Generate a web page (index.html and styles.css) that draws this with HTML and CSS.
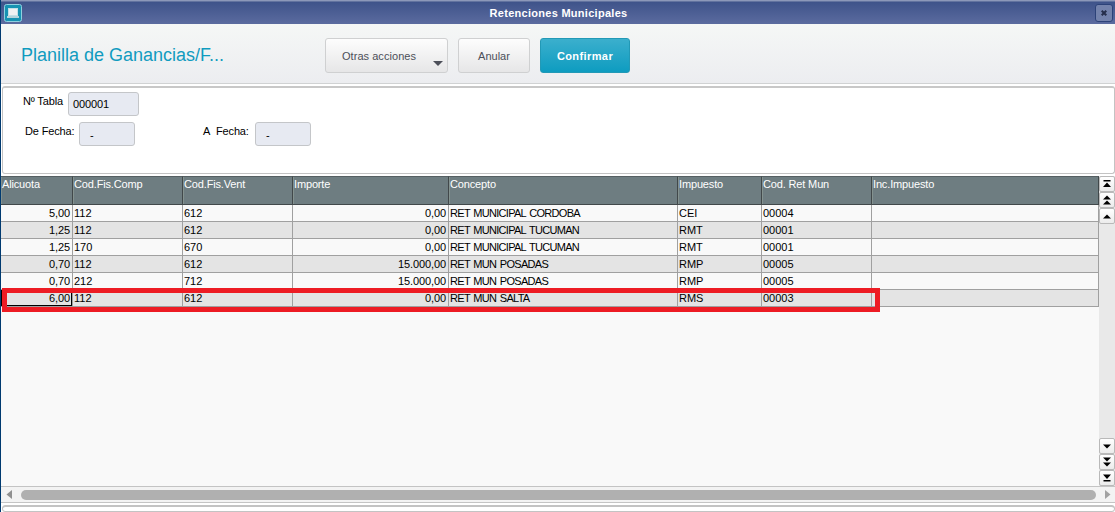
FILE: index.html
```html
<!DOCTYPE html>
<html lang="es">
<head>
    <meta charset="UTF-8">
    <title>Retenciones Municipales</title>
    <link rel="stylesheet" href="styles.css">
</head>
<body>
    <div class="window">
        <div class="titlebar">
            <svg class="app-icon" width="18" height="18" viewBox="0 0 18 18">
                <rect x="0.5" y="0.5" width="17" height="17" rx="2" fill="#1692b2" stroke="#8fd0e0"/>
                <rect x="4.5" y="4.5" width="9" height="7" fill="#eef0f2" stroke="#c3dfe7"/>
                <path d="M3 12h12v2H3z" fill="#b4d3dc"/>
            </svg>
            <span class="window-title">Retenciones Municipales</span>
            <button class="close">
                <svg width="6" height="6" viewBox="0 0 6 6"><path d="M0.7 0.7L5.3 5.3M5.3 0.7L0.7 5.3" stroke="#252e4b" stroke-width="2"/></svg>
            </button>
        </div>

        <div class="toolbar">
            <h1>Planilla de Ganancias/F...</h1>
            <button class="btn btn-more"><span>Otras acciones</span><i class="caret"></i></button>
            <button class="btn btn-cancel">Anular</button>
            <button class="btn btn-ok">Confirmar</button>
        </div>

        <div class="form">
            <div class="line">
                <label class="lbl-table">Nº Tabla</label>
                <div class="field field-table">000001</div>
            </div>
            <div class="line">
                <label class="lbl-from">De Fecha:</label>
                <div class="field field-date">-</div>
                <label class="lbl-to">A&nbsp; Fecha:</label>
                <div class="field field-date">-</div>
            </div>
        </div>

        <div class="grid-area">
            <div class="grid">
                <table>
                    <colgroup>
                        <col class="c1"><col class="c2"><col class="c3"><col class="c4">
                        <col class="c5"><col class="c6"><col class="c7"><col class="c8">
                    </colgroup>
                    <thead>
                        <tr><th>Alicuota</th><th>Cod.Fis.Comp</th><th>Cod.Fis.Vent</th><th>Importe</th><th>Concepto</th><th>Impuesto</th><th>Cod. Ret Mun</th><th>Inc.Impuesto</th></tr>
                    </thead>
                    <tbody>
                        <tr><td class="num">5,00</td><td>112</td><td>612</td><td class="num">0,00</td><td class="text">RET MUNICIPAL CORDOBA</td><td class="tax">CEI</td><td>00004</td><td></td></tr>
                        <tr><td class="num">1,25</td><td>112</td><td>612</td><td class="num">0,00</td><td class="text">RET MUNICIPAL TUCUMAN</td><td class="tax">RMT</td><td>00001</td><td></td></tr>
                        <tr><td class="num">1,25</td><td>170</td><td>670</td><td class="num">0,00</td><td class="text">RET MUNICIPAL TUCUMAN</td><td class="tax">RMT</td><td>00001</td><td></td></tr>
                        <tr><td class="num">0,70</td><td>112</td><td>612</td><td class="num">15.000,00</td><td class="text">RET MUN POSADAS</td><td class="tax">RMP</td><td>00005</td><td></td></tr>
                        <tr><td class="num">0,70</td><td>212</td><td>712</td><td class="num">15.000,00</td><td class="text">RET MUN POSADAS</td><td class="tax">RMP</td><td>00005</td><td></td></tr>
                        <tr><td class="num current">6,00</td><td>112</td><td>612</td><td class="num">0,00</td><td class="text">RET MUN SALTA</td><td class="tax">RMS</td><td>00003</td><td></td></tr>
                    </tbody>
                </table>
                <div class="highlight"></div>
            </div>
            <div class="vscroll">
                <button><svg width="8" height="8" viewBox="0 0 8 8"><path d="M0.5 0h7v1.4h-7zM4 2.5L8 7H0z"/></svg></button>
                <button><svg width="8" height="10" viewBox="0 0 8 10"><path d="M4 0.5L8 4.5H0zM4 5.5L8 9.5H0z"/></svg></button>
                <button><svg width="8" height="5" viewBox="0 0 8 5"><path d="M4 0.5L8 4.5H0z"/></svg></button>
                <div class="track"></div>
                <button><svg width="8" height="5" viewBox="0 0 8 5"><path d="M0 0.5h8L4 4.5z"/></svg></button>
                <button><svg width="8" height="10" viewBox="0 0 8 10"><path d="M0 0.5h8L4 4.5zM0 5.5h8L4 9.5z"/></svg></button>
                <button><svg width="8" height="8" viewBox="0 0 8 8"><path d="M0 0.5h8L4 5zM0.5 6h7v1.4h-7z"/></svg></button>
            </div>
        </div>

        <div class="hscroll">
            <svg width="6" height="9" viewBox="0 0 6 9"><path d="M6 0v9L0.5 4.5z" fill="#909090"/></svg>
            <div class="thumb"></div>
            <svg width="6" height="9" viewBox="0 0 6 9"><path d="M0 0v9l5.5-4.5z" fill="#a2a2a2"/></svg>
        </div>
        <div class="bottom-panel"></div>
    </div>
</body>
</html>
```

FILE: styles.css
```css
* {
    box-sizing: border-box;
}
body {
    margin: 0;
    font-family: "Liberation Sans", Arial, sans-serif;
    font-size: 11px;
    color: #000;
}
button {
    font-family: inherit;
    padding: 0;
}
svg {
    display: block;
}
.window {
    display: flex;
    flex-direction: column;
    width: 1115px;
    height: 512px;
    overflow: hidden;
    border-left: 1px solid #003a70;
    background: #fff;
}
.window > div {
    flex-shrink: 0;
}

.titlebar {
    display: flex;
    align-items: center;
    height: 24px;
    padding: 0 2px 0 3px;
    border-top: 1px solid #8c98b9;
    background: linear-gradient(#3d5289, #5b6b9f);
    box-shadow: inset 0 1px #62739f;
}
.window-title {
    flex: 1;
    text-align: center;
    font-weight: bold;
    letter-spacing: 0.28px;
    color: #fff;
}
.close {
    display: flex;
    align-items: center;
    justify-content: center;
    width: 18px;
    height: 18px;
    border: 1px solid #2c4278;
    border-radius: 3px;
    background: #7382ac;
}

.toolbar {
    display: flex;
    height: 60px;
    padding: 14px 0 0 20px;
    border-bottom: 1px solid #d0d2d3;
    background: linear-gradient(#f5f7f6, #ecedf0);
}
.toolbar h1 {
    width: 304px;
    margin: 0;
    font-size: 18px;
    font-weight: normal;
    line-height: 34px;
    color: #109bbf;
}
.btn {
    height: 35px;
    border: 1px solid #cfd0d1;
    border-radius: 3px;
    background: linear-gradient(#fdfdfd, #e6e6e7);
    font-size: 11px;
    color: #4c4f59;
}
.btn-more {
    position: relative;
    width: 123px;
    padding-right: 15px;
    letter-spacing: 0.05px;
}
.caret {
    position: absolute;
    right: 4px;
    bottom: 6px;
    border: 5px solid transparent;
    border-top-color: #4c4f59;
    border-bottom: 0;
}
.btn-cancel {
    width: 72px;
    margin-left: 10px;
}
.btn-ok {
    width: 90px;
    margin-left: 10px;
    border-color: #2299b6;
    background: linear-gradient(#3bafcd, #0e9cc0);
    font-weight: bold;
    letter-spacing: 0.4px;
    color: #fff;
}

.form {
    height: 88px;
    margin: 2px 0 0 1px;
    padding: 4px 0 0 0;
    border: 1px solid #c3c3c3;
    border-top: 2px solid #c8c8c8;
    border-radius: 3px;
}
.line {
    display: flex;
    height: 30px;
}
.line label {
    line-height: 19px;
    letter-spacing: -0.15px;
    white-space: nowrap;
}
.lbl-table {
    width: 65px;
    padding-left: 20px;
}
.lbl-from {
    width: 76px;
    padding-left: 22px;
}
.lbl-to {
    width: 120px;
    padding-left: 68px;
}
.field {
    height: 24px;
    border: 1px solid #c4c6c9;
    border-radius: 3px;
    background: #e7eaf2;
    line-height: 23px;
}
.field-table {
    width: 71px;
    padding-left: 4px;
    letter-spacing: -0.1px;
}
.field-date {
    width: 56px;
    padding-left: 10px;
    line-height: 25px;
}

.grid-area {
    display: flex;
    height: 310px;
    margin-top: 2px;
    background: #f9f9f9;
}
.grid {
    position: relative;
    width: 1098px;
}
table {
    width: 1098px;
    table-layout: fixed;
    border-collapse: separate;
    border-spacing: 0;
}
.c1 { width: 72px; }
.c2 { width: 110px; }
.c3 { width: 110px; }
.c4 { width: 156px; }
.c5 { width: 229px; }
.c6 { width: 84px; }
.c7 { width: 110px; }
.c8 { width: 227px; }
th {
    height: 29px;
    padding: 1px 0 0 1px;
    border-top: 1px solid #555f62;
    border-right: 1px solid #41484a;
    border-bottom: 1px solid #41484a;
    background: #6e7d81;
    box-shadow: inset 1px 0 #84928f;
    font-weight: normal;
    line-height: 13px;
    letter-spacing: -0.15px;
    text-align: left;
    vertical-align: top;
    color: #fff;
}
td {
    height: 17px;
    padding: 0 1px;
    border-right: 1px solid #a0a0a0;
    border-bottom: 1px solid #a0a0a0;
    line-height: 16px;
    white-space: nowrap;
}
tbody tr:nth-child(even) {
    background: #e4e4e4;
}
td.num {
    padding-right: 2px;
    letter-spacing: -0.1px;
    text-align: right;
}
td.text {
    letter-spacing: -0.7px;
    word-spacing: 1.2px;
}
td.current {
    box-shadow: inset 0 0 0 1px #000;
}
.highlight {
    position: absolute;
    left: 1px;
    top: 112px;
    width: 878px;
    height: 24px;
    border: 5px solid #ed1c24;
}

.vscroll {
    display: flex;
    flex-direction: column;
    width: 16px;
    background: #e9e9e9;
}
.vscroll button {
    display: flex;
    align-items: center;
    justify-content: center;
    height: 16px;
    border: 1px solid #b9b9b9;
    border-radius: 2px;
    background: linear-gradient(#fff, #ececec);
}
.track {
    flex: 1;
}

.hscroll {
    display: flex;
    align-items: center;
    gap: 9px;
    height: 17px;
    padding: 0 4px 0 5px;
    border-top: 1px solid #c4c4c4;
    border-bottom: 1px solid #c4c4c4;
    background: #f3f3f3;
}
.thumb {
    flex: 1;
    height: 10px;
    border-radius: 5px;
    background: #b0b0b0;
}
.bottom-panel {
    height: 7px;
    margin: 2px 0 0 1px;
    border: 1px solid #c3c3c3;
    border-top-width: 2px;
    border-radius: 4px;
}
```
